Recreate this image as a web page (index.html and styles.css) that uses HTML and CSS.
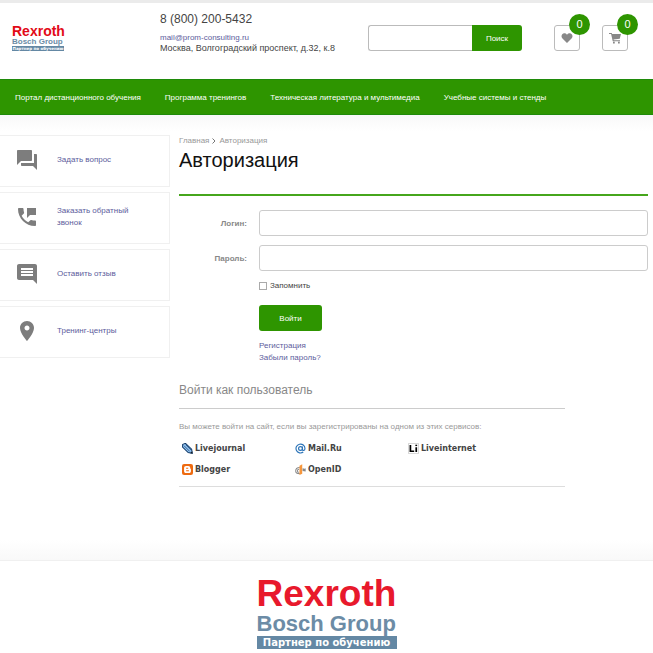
FILE: index.html
```html
<!DOCTYPE html>
<html lang="ru">
<head>
    <meta charset="utf-8">
    <title>Авторизация</title>
    <link rel="stylesheet" href="styles.css">
</head>
<body>

    <header class="header">
        <a class="logo" href="#">
            <span class="logo-name">Rexroth</span>
            <span class="logo-group">Bosch Group</span>
            <span class="logo-partner">Партнер по обучению</span>
        </a>
        <div class="contacts">
            <div class="phone">8 (800) 200-5432</div>
            <a href="#">mail@prom-consulting.ru</a>
            <div class="address">Москва, Волгоградский проспект, д.32, к.8</div>
        </div>
        <form class="search">
            <input type="text" aria-label="Поиск">
            <button type="button">Поиск</button>
        </form>
        <div class="counters">
            <a class="counter" href="#" aria-label="Избранное">
                <svg width="12" height="12" viewBox="0 0 24 24"><path d="M12 22L2.500 12.500C.5 10.500.5 6.500 2.500 4.500c2.500-2.500 6.500-2.500 9.500 1 3-3.500 7-3.500 9.500-1 2 2 2 6 0 8z"/></svg>
                <span class="badge">0</span>
            </a>
            <a class="counter" href="#" aria-label="Корзина">
                <svg width="12" height="12" viewBox="0 0 24 24"><path d="M0 2h5.500l.8 2H24l-2.500 9.500L9 15l.4 1.500H22v2H7.500L4.200 4H0zM8 19.500h3.500V23H8zM18 19.500h3.500V23H18z"/></svg>
                <span class="badge">0</span>
            </a>
        </div>
    </header>

    <nav class="nav">
        <a href="#">Портал дистанционного обучения</a>
        <a href="#">Программа тренингов</a>
        <a href="#">Техническая литература и мультимедиа</a>
        <a href="#">Учебные системы и стенды</a>
    </nav>

    <div class="page">
        <aside class="sidebar">
            <a class="card" href="#">
                <svg width="24" height="24" viewBox="0 0 24 24"><path d="M21 6h-2v9H6v2c0 .55.45 1 1 1h11l4 4V7c0-.55-.45-1-1-1zm-4 6V3c0-.55-.45-1-1-1H3c-.55 0-1 .45-1 1v14l4-4h10c.55 0 1-.45 1-1z"/></svg>
                <span>Задать вопрос</span>
            </a>
            <a class="card" href="#">
                <svg width="24" height="24" viewBox="0 0 24 24"><path d="M20 15.500c-1.250 0-2.450-.2-3.570-.57-.35-.11-.74-.03-1.020.24l-2.200 2.200c-2.830-1.440-5.150-3.750-6.590-6.590l2.200-2.210c.28-.26.36-.65.25-1C8.700 6.450 8.500 5.250 8.500 4c0-.55-.45-1-1-1H4c-.55 0-1 .45-1 1 0 9.390 7.610 17 17 17 .55 0 1-.45 1-1v-3.500c0-.55-.45-1-1-1zM12 3v10l3-3h6V3h-9z"/></svg>
                <span>Заказать обратный звонок</span>
            </a>
            <a class="card" href="#">
                <svg width="24" height="24" viewBox="0 0 24 24"><path d="M21.990 4c0-1.100-.89-2-1.990-2H4c-1.100 0-2 .9-2 2v12c0 1.100.9 2 2 2h14l4 4-.01-18zM18 14H6v-2h12v2zm0-3H6V9h12v2zm0-3H6V6h12v2z"/></svg>
                <span>Оставить отзыв</span>
            </a>
            <a class="card" href="#">
                <svg width="24" height="24" viewBox="0 0 24 24"><path d="M12 2C8.130 2 5 5.130 5 9c0 5.250 7 13 7 13s7-7.750 7-13c0-3.870-3.130-7-7-7zm0 9.500c-1.380 0-2.500-1.120-2.500-2.500s1.120-2.500 2.500-2.500 2.500 1.120 2.500 2.500-1.120 2.500-2.500 2.500z"/></svg>
                <span>Тренинг-центры</span>
            </a>
        </aside>

        <main class="content">
            <div class="breadcrumbs">
                <a href="#">Главная</a>
                <svg width="4" height="6" viewBox="0 0 4 6"><path d="M.5.5L3 3 .5 5.500"/></svg>
                <span>Авторизация</span>
            </div>
            <h1>Авторизация</h1>

            <form class="login">
                <label class="name" for="login">Логин:</label>
                <input class="field" type="text" id="login">
                <label class="name" for="password">Пароль:</label>
                <input class="field" type="password" id="password">
                <div class="remember">
                    <input type="checkbox" id="remember">
                    <label for="remember">Запомнить</label>
                </div>
                <button class="submit" type="button">Войти</button>
                <div class="links">
                    <a href="#">Регистрация</a>
                    <a href="#">Забыли пароль?</a>
                </div>
            </form>

            <section class="social">
                <h2>Войти как пользователь</h2>
                <p>Вы можете войти на сайт, если вы зарегистрированы на одном из этих сервисов:</p>
                <div class="services">
                    <a href="#">
                        <svg width="11" height="11" viewBox="0 0 16 16"><path d="M1 2l4-1.500L14 9l1 6-6-1L.8 6z" fill="#8fc0ee" stroke="#123a68" stroke-width="1.500"/><path d="M3 4l8 8M5.500 2.500l8 8" stroke="#123a68"/><path d="M12 15l3-3v3z" fill="#111"/></svg>
                        Livejournal
                    </a>
                    <a href="#">
                        <svg width="11" height="11" viewBox="0 0 16 16" fill="none" stroke="#2c74b8" stroke-width="1.700"><circle cx="8" cy="8" r="2.800"/><path d="M10.800 5v4.500c0 2.200 3.700 1.800 3.700-1.500A6.500 6.500 0 1 0 12 13.200"/></svg>
                        Mail.Ru
                    </a>
                    <a href="#">
                        <svg width="11" height="11" viewBox="0 0 16 16"><rect x=".5" y=".5" width="15" height="15" rx="1" fill="#fff" stroke="#bbb"/><path d="M3.500 3v9H9M12 6v7" fill="none" stroke="#000" stroke-width="2.500"/><path d="M10.700 2.500h2.600v2h-2.600z"/></svg>
                        Liveinternet
                    </a>
                    <a href="#">
                        <svg width="11" height="11" viewBox="0 0 16 16"><rect width="16" height="16" rx="3" fill="#ee6a10"/><path d="M6 3h3c2 0 3 1 3 3 0 1 1 .6 1 2v2c0 2-1 3-3 3H6c-2 0-3-1-3-3V6c0-2 1-3 3-3z" fill="#fff"/><path d="M6 6.200h3M6 9.800h4" stroke="#ee6a10" stroke-width="1.500"/></svg>
                        Blogger
                    </a>
                    <a href="#">
                        <svg width="11" height="11" viewBox="0 0 16 16"><path d="M7 5C3 5 1 7 1 10s3 4 6 4M6 7.500c-2 0-2.500 1-2.500 2.500S5 12 6 12" fill="none" stroke="#888" stroke-width="1.500"/><path d="M6.500 2.500l4-2V14l-4 2z" fill="#f6963c"/><path d="M11 6l3 1 1.500-1v5L11 10z" fill="#888"/></svg>
                        OpenID
                    </a>
                </div>
            </section>
        </main>
    </div>

    <footer class="footer">
        <a class="logo logo-big" href="#">
            <span class="logo-name">Rexroth</span>
            <span class="logo-group">Bosch Group</span>
            <span class="logo-partner">Партнер по обучению</span>
        </a>
    </footer>

</body>
</html>
```
FILE: styles.css
```css
* {
    box-sizing: border-box;
}
body {
    margin: 0;
    background: #fff;
    color: #444;
    font: 8px/11px "Liberation Sans", Arial, sans-serif;
}
a {
    color: #5c5c9c;
    text-decoration: none;
}
input, button {
    font: inherit;
    margin: 0;
}

/* header */
.header {
    display: flex;
    align-items: flex-start;
    border-top: 3px solid #ebebeb;
    padding: 0 25px 0 12px;
    height: 79px;
}
.logo {
    display: flex;
    flex-direction: column;
    flex: none;
    width: 52px;
    margin-top: 22px;
    font-weight: bold;
    white-space: nowrap;
}
.logo-name {
    color: #e20a17;
    font-size: 14px;
    line-height: 13px;
}
.logo-group {
    color: #6c8ca6;
    font-size: 8px;
    line-height: 8px;
}
.logo-partner {
    background: #6488a4;
    color: #fff;
    font: bold 4px/5px "DejaVu Sans", sans-serif;
    text-align: center;
}
.contacts {
    flex: none;
    width: 208px;
    margin: 8px 0 0 96px;
    white-space: nowrap;
}
.phone {
    font-size: 12px;
    line-height: 16px;
    margin-bottom: 5px;
}
.address {
    font-size: 9px;
}
.search {
    display: flex;
    flex: 1;
    min-width: 0;
    height: 26px;
    margin-top: 22px;
}
.search input {
    flex: 1;
    min-width: 0;
    border: 1px solid #bbb;
    border-right: 0;
    border-radius: 3px 0 0 3px;
    padding: 0 8px;
}
.search button {
    width: 50px;
    border: 0;
    border-radius: 0 3px 3px 0;
    background: #2e9500;
    color: #fff;
    padding: 0;
}
.counters {
    display: flex;
    gap: 22px;
    margin: 22px 0 0 32px;
}
.counter {
    position: relative;
    display: flex;
    align-items: center;
    justify-content: center;
    width: 26px;
    height: 26px;
    border: 1px solid #bbb;
    border-radius: 3px;
    fill: #888;
}
.badge {
    position: absolute;
    top: -12px;
    right: -11px;
    width: 21px;
    height: 21px;
    border-radius: 50%;
    background: #2e9500;
    color: #fff;
    font-size: 11px;
    line-height: 21px;
    text-align: center;
}

/* menu */
.nav {
    display: flex;
    align-items: center;
    gap: 24px;
    height: 36px;
    padding: 0 15px;
    background: #2e9500;
    border-top: 1px solid #1f8a0a;
    border-bottom: 1px solid #1f8a0a;
    white-space: nowrap;
}
.nav a {
    color: #fff;
}

/* page */
.page {
    display: flex;
    gap: 9px;
    min-height: 445px;
    padding: 20px 5px 0 0;
    background: linear-gradient(#f8f8f8, #fff 16px, #fff 425px, #f9f9f9);
}
.sidebar {
    display: flex;
    flex-direction: column;
    gap: 5px;
    width: 170px;
}
.card {
    display: flex;
    align-items: center;
    gap: 18px;
    height: 52px;
    padding: 0 30px 2px 15px;
    border: 1px solid #f0f0f0;
    border-left: 0;
    background: #fff;
    line-height: 12px;
}
.card svg {
    flex: none;
    fill: #7d7d7d;
}
.content {
    flex: 1;
}
.breadcrumbs {
    display: flex;
    align-items: center;
    gap: 3px;
    color: #999;
}
.breadcrumbs a {
    color: #999;
}
.breadcrumbs svg {
    fill: none;
    stroke: #777;
}
h1 {
    margin: 0 0 14px;
    padding-bottom: 20px;
    border-bottom: 2px solid #46a61c;
    color: #111;
    font-size: 20px;
    font-weight: normal;
    line-height: 28px;
}

/* login form */
.login {
    display: grid;
    grid-template-columns: 68px 1fr;
    gap: 9px 12px;
    align-items: center;
}
.name {
    color: #888;
    font-weight: bold;
    text-align: right;
}
.field {
    width: 100%;
    height: 26px;
    border: 1px solid #ccc;
    border-radius: 3px;
    padding: 0 8px;
}
.remember, .submit, .links {
    grid-column: 2;
}
.remember {
    display: flex;
    align-items: center;
    gap: 3px;
}
.remember input {
    appearance: none;
    width: 8px;
    height: 8px;
    border: 1px solid #aaa;
}
.submit {
    width: 63px;
    height: 26px;
    margin-top: 5px;
    border: 0;
    border-radius: 3px;
    background: #2e9500;
    color: #fff;
}
.links {
    display: flex;
    flex-direction: column;
    align-items: flex-start;
    line-height: 12px;
}

/* social services */
.social {
    max-width: 386px;
    margin-top: 18px;
    border-bottom: 1px solid #ddd;
    color: #999;
}
h2 {
    margin: 0 0 12px;
    padding-bottom: 10px;
    border-bottom: 1px solid #ccc;
    color: #888;
    font-size: 12px;
    font-weight: normal;
    line-height: 16px;
}
.social p {
    margin: 0;
}
.services {
    display: grid;
    grid-template-columns: repeat(3, 113px);
    gap: 10px 0;
    padding: 11px 3px;
}
.services a {
    display: flex;
    align-items: center;
    gap: 2px;
    color: #444;
    font: bold 8px/11px "DejaVu Sans", sans-serif;
}

/* footer */
.footer {
    display: flex;
    justify-content: center;
    height: 93px;
    border-top: 1px solid #f0f0f0;
}
.logo-big {
    width: 140px;
    margin-top: 15px;
}
.logo-big .logo-name {
    color: #e8192c;
    font-size: 37px;
    line-height: 36px;
}
.logo-big .logo-group {
    font-size: 22px;
    line-height: 24px;
}
.logo-big .logo-partner {
    font-size: 10px;
    line-height: 13px;
}
```
